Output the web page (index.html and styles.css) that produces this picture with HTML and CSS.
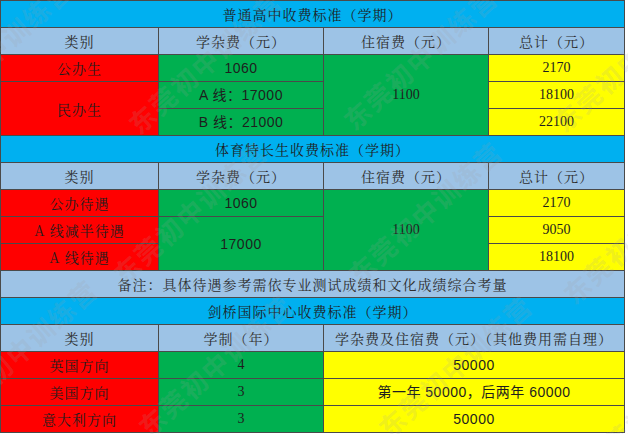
FILE: index.html
```html
<!DOCTYPE html>
<html lang="zh-CN">
<head>
<meta charset="utf-8">
<link rel="stylesheet" href="styles.css">
</head>
<body>
<div class="sheet">
<table class="fees">
  <colgroup>
    <col class="c1"><col class="c2"><col class="c3"><col class="c4">
  </colgroup>
  <tbody>
    <tr class="row"><td class="title" colspan="4">普通高中收费标准（学期）</td></tr>
    <tr class="row"><td class="head">类别</td><td class="head">学杂费（元）</td><td class="head">住宿费（元）</td><td class="head">总计（元）</td></tr>
    <tr class="row"><td class="red">公办生</td><td class="green sans">1060</td><td class="green serif" rowspan="3">1100</td><td class="yellow serif">2170</td></tr>
    <tr class="row"><td class="red" rowspan="2">民办生</td><td class="green sans">A 线：17000</td><td class="yellow serif">18100</td></tr>
    <tr class="row"><td class="green sans">B 线：21000</td><td class="yellow serif">22100</td></tr>

    <tr class="row"><td class="title" colspan="4">体育特长生收费标准（学期）</td></tr>
    <tr class="row"><td class="head">类别</td><td class="head">学杂费（元）</td><td class="head">住宿费（元）</td><td class="head">总计（元）</td></tr>
    <tr class="row"><td class="red">公办待遇</td><td class="green sans">1060</td><td class="green serif" rowspan="3">1100</td><td class="yellow serif">2170</td></tr>
    <tr class="row"><td class="red">A 线减半待遇</td><td class="green sans" rowspan="2">17000</td><td class="yellow serif">9050</td></tr>
    <tr class="row"><td class="red">A 线待遇</td><td class="yellow serif">18100</td></tr>
    <tr class="row"><td class="head" colspan="4">备注：具体待遇参考需依专业测试成绩和文化成绩综合考量</td></tr>

    <tr class="row"><td class="title" colspan="4">剑桥国际中心收费标准（学期）</td></tr>
    <tr class="row"><td class="head">类别</td><td class="head">学制（年）</td><td class="head" colspan="2">学杂费及住宿费（元）（其他费用需自理）</td></tr>
    <tr class="row"><td class="red">英国方向</td><td class="green serif">4</td><td class="yellow sans" colspan="2">50000</td></tr>
    <tr class="row"><td class="red">美国方向</td><td class="green serif">3</td><td class="yellow sans" colspan="2">第一年 50000，后两年 60000</td></tr>
    <tr class="row"><td class="red">意大利方向</td><td class="green serif">3</td><td class="yellow sans" colspan="2">50000</td></tr>
  </tbody>
</table>
<div class="wm" aria-hidden="true">
  <span class="mark m1">东莞初中训练营</span>
  <span class="mark m2">东莞初中训练营</span>
  <span class="mark m3">东莞初中训练营</span>
  <span class="mark m4">东莞初中训练营</span>
  <span class="mark m5">东莞初中训练营</span>
  <span class="mark m6">东莞初中训练营</span>
  <span class="mark m7">东莞初中训练营</span>
  <span class="mark m8">东莞初中训练营</span>
  <span class="mark m9">东莞初中训练营</span>
  <span class="mark m10">东莞初中训练营</span>
  <span class="mark m11">东莞初中训练营</span>
</div>
</div>
</body>
</html>
```

FILE: styles.css
```css
html, body {
  margin: 0;
  padding: 0;
  background: #ffffff;
}

.sheet {
  position: relative;
  width: 628px;
  height: 434px;
  overflow: hidden;
}

.fees {
  border-collapse: collapse;
  table-layout: fixed;
  width: 624px;
  font-family: "Noto Serif CJK SC", "Liberation Serif", "Noto Sans CJK SC", serif;
  font-size: 14px;
  color: #1e1e1e;
}

.c1 { width: 158px; }
.c2 { width: 165px; }
.c3 { width: 165px; }
.c4 { width: 136px; }

.row { height: 27px; }

.fees td {
  border: 1px solid #4a4a4a;
  padding: 0;
  text-align: center;
  vertical-align: middle;
  line-height: 18px;
  letter-spacing: 1px;
}

.title { background: #00b0f0; }
.head { background: #9dc3e6; color: #2e2e2e; }
.red { background: #ff0000; }
.green { background: #00b050; }
.yellow { background: #ffff00; }

.fees td.sans {
  font-family: "Liberation Sans", "Noto Sans CJK SC", sans-serif;
  letter-spacing: 0.5px;
}
.fees td.serif {
  font-family: "Liberation Serif", "Noto Sans CJK SC", serif;
  letter-spacing: 0;
}

.wm {
  position: absolute;
  inset: 0;
  pointer-events: none;
}

.mark {
  position: absolute;
  width: 220px;
  margin-left: -110px;
  margin-top: -16px;
  text-align: center;
  font-family: "Noto Sans CJK SC", sans-serif;
  font-weight: 700;
  font-size: 26px;
  line-height: 32px;
  letter-spacing: 2px;
  color: rgba(160, 160, 160, 0.18);
  transform: rotate(-42deg);
  white-space: nowrap;
}

.m1 { left: -5px; top: 50px; }
.m2 { left: 205px; top: 62px; }
.m3 { left: 420px; top: 58px; }
.m4 { left: 630px; top: 60px; }
.m5 { left: 190px; top: 212px; }
.m6 { left: 425px; top: 212px; }
.m7 { left: 640px; top: 232px; }
.m8 { left: 20px; top: 350px; }
.m9 { left: 215px; top: 365px; }
.m10 { left: 455px; top: 366px; }
.m11 { left: 660px; top: 400px; }
```
